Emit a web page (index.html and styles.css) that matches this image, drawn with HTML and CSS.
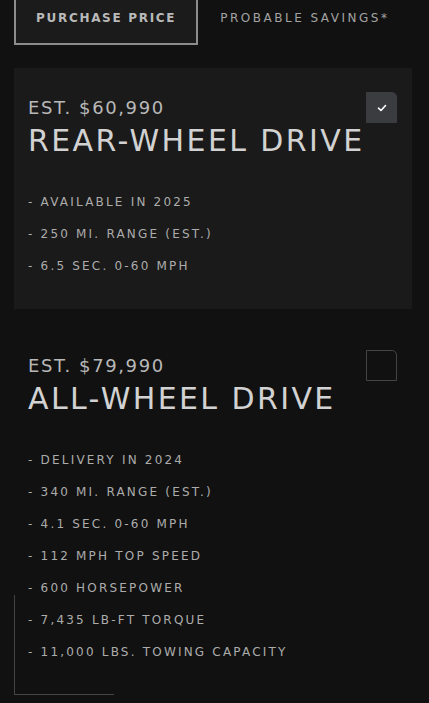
FILE: index.html
```html
<!DOCTYPE html>
<html lang="en">
<head>
    <meta charset="UTF-8">
    <meta name="viewport" content="width=device-width, initial-scale=1.0">
    <title>Model Options</title>
    <link rel="stylesheet" href="styles.css">
</head>
<body>
    <div class="tabs">
        <div class="tab active">Purchase Price</div>
        <div class="tab">Probable Savings*</div>
    </div>

    <div class="options">
        <div class="option selected">
            <div class="option-head">
                <div>
                    <div class="price">Est. $60,990</div>
                    <h2 class="trim">Rear-Wheel Drive</h2>
                </div>
                <div class="checkbox">
                    <svg width="12" height="12" viewBox="0 0 12 12">
                        <path d="M2.5 6.2 L5 8.5 L9.5 3.5" fill="none" stroke="#fff" stroke-width="1.6" stroke-linecap="round" stroke-linejoin="round"/>
                    </svg>
                </div>
            </div>
            <ul class="specs">
                <li>- Available in 2025</li>
                <li>- 250 mi. range (est.)</li>
                <li>- 6.5 sec. 0-60 mph</li>
            </ul>
        </div>

        <div class="option">
            <div class="option-head">
                <div>
                    <div class="price">Est. $79,990</div>
                    <h2 class="trim">All-Wheel Drive</h2>
                </div>
                <div class="checkbox"></div>
            </div>
            <ul class="specs">
                <li>- Delivery in 2024</li>
                <li>- 340 mi. range (est.)</li>
                <li>- 4.1 sec. 0-60 mph</li>
                <li>- 112 mph top speed</li>
                <li>- 600 horsepower</li>
                <li>- 7,435 lb-ft torque</li>
                <li>- 11,000 lbs. towing capacity</li>
            </ul>
        </div>
    </div>
</body>
</html>
```

FILE: styles.css
```css
body {
    font-family: "DejaVu Sans", "Open Sans", sans-serif;
    margin: 0;
    padding: 0 17px 0 14px;
    background-color: #111111;
    color: #bdbdbd;
    text-transform: uppercase;
}

.tabs {
    display: flex;
    margin-top: -11px;
}
.tab {
    padding: 19px 20px 17px;
    border: 2px solid transparent;
    font-size: 12px;
    letter-spacing: 2.5px;
    line-height: 16px;
    color: #a3a3a3;
}
.tab.active {
    border-color: #8c8c8c;
    background-color: #1b1b1b;
    color: #b9b9b9;
    font-weight: bold;
    letter-spacing: 1.7px;
}

.options {
    margin-top: 23px;
    display: flex;
    flex-direction: column;
    gap: 17px;
}

.option {
    position: relative;
    padding: 24px 15px 35px 14px;
}
.option.selected {
    background-color: #1a1a1a;
}
/* corner bracket on the unselected card */
.option:not(.selected)::after {
    content: "";
    position: absolute;
    left: 0;
    bottom: 0;
    width: 99px;
    height: 99px;
    border-left: 1px solid #444;
    border-bottom: 1px solid #444;
}

.option-head {
    display: flex;
    justify-content: space-between;
    align-items: flex-start;
}
.price {
    margin-top: 5px;
    font-size: 18px;
    letter-spacing: 1.6px;
    line-height: 22px;
    color: #b8b8b8;
}
.trim {
    margin: 5px 0 0;
    font-size: 30px;
    font-weight: normal;
    letter-spacing: 2.4px;
    line-height: 34px;
    color: #d2d2d2;
}

.checkbox {
    width: 29px;
    height: 29px;
    border: 1px solid #444;
    border-top-right-radius: 5px;
    display: flex;
    align-items: center;
    justify-content: center;
}
.selected .checkbox {
    background-color: #3a3c40;
    border-color: #3a3c40;
}

.specs {
    list-style: none;
    margin: 36px 0 0;
    padding: 0;
    display: flex;
    flex-direction: column;
    gap: 16px;
}
.specs li {
    font-size: 12px;
    letter-spacing: 2.2px;
    line-height: 16px;
    color: #acacac;
}
```
